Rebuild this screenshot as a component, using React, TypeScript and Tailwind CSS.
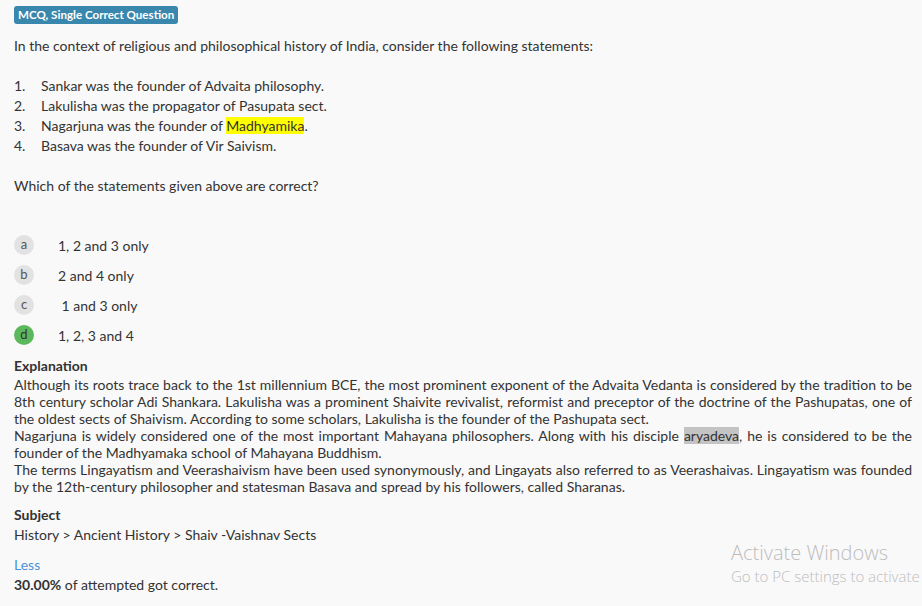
import React from "react";

const options = [
  { k: "a", t: "1, 2 and 3 only", correct: false },
  { k: "b", t: "2 and 4 only", correct: false },
  { k: "c", t: " 1 and 3 only", correct: false },
  { k: "d", t: "1, 2, 3 and 4", correct: true },
];

export default function App() {
  return (
    <div
      className="relative min-h-[606px] w-[922px] overflow-hidden bg-[#f9f9f9] pl-[14px] pr-[10px] pt-[6px] text-[14px] text-[#333333]"
      style={{ fontFamily: "Lato, 'Open Sans', sans-serif" }}
    >
      <div className="flex">
        <span className="rounded-[3px] bg-[#3a87ad] px-[4px] text-[11.6px] font-bold leading-[18px] text-white">
          MCQ, Single Correct Question
        </span>
      </div>

      <p className="mt-[12px] leading-[20px]">
        In the context of religious and philosophical history of India, consider the following statements:
      </p>

      <ol className="mt-[20px] leading-[20px]">
        <li className="flex">
          <span className="w-[27px]">1.</span>
          <span>Sankar was the founder of Advaita philosophy.</span>
        </li>
        <li className="flex">
          <span className="w-[27px]">2.</span>
          <span>Lakulisha was the propagator of Pasupata sect.</span>
        </li>
        <li className="flex">
          <span className="w-[27px]">3.</span>
          <span>
            Nagarjuna was the founder of <span className="bg-[#ffff00]">Madhyamika</span>.
          </span>
        </li>
        <li className="flex">
          <span className="w-[27px]">4.</span>
          <span>Basava was the founder of Vir Saivism.</span>
        </li>
      </ol>

      <p className="mt-[20px] leading-[20px]">Which of the statements given above are correct?</p>

      <div className="mt-[34px] flex flex-col">
        {options.map((o) => (
          <div key={o.k} className="flex h-[30px] items-center">
            <span
              className={
                o.correct
                  ? "flex h-[20px] w-[20px] items-center justify-center rounded-full bg-[#5cb85c] pb-[1px] text-[13px] leading-none text-[#333333]"
                  : "flex h-[20px] w-[20px] items-center justify-center rounded-full bg-[#e2e2e2] pb-[1px] text-[13px] leading-none text-[#555555]"
              }
            >
              {o.k}
            </span>
            <span className="ml-[24px] whitespace-pre">{o.t}</span>
          </div>
        ))}
      </div>

      <div className="mt-[7px] font-bold leading-[18px]">Explanation</div>
      <p className="mt-[1px] text-justify leading-[17px]">
        Although its roots trace back to the 1st millennium BCE, the most prominent exponent of the Advaita Vedanta is
        considered by the tradition to be 8th century scholar Adi Shankara. Lakulisha was a prominent Shaivite revivalist,
        reformist and preceptor of the doctrine of the Pashupatas, one of the oldest sects of Shaivism. According to some
        scholars, Lakulisha is the founder of the Pashupata sect.
        <br />
        Nagarjuna is widely considered one of the most important Mahayana philosophers. Along with his disciple{" "}
        <span className="bg-[#c4c4c4]">aryadeva</span>, he is considered to be the founder of the Madhyamaka school of
        Mahayana Buddhism.
        <br />
        The terms Lingayatism and Veerashaivism have been used synonymously, and Lingayats also referred to as
        Veerashaivas. Lingayatism was founded by the 12th-century philosopher and statesman Basava and spread by his
        followers, called Sharanas.
      </p>

      <div className="mt-[10px] font-bold leading-[20px]">Subject</div>
      <div className="leading-[20px]">History &gt; Ancient History &gt; Shaiv -Vaishnav Sects</div>

      <div className="mt-[10px] leading-[20px] text-[#4a94d8]">Less</div>
      <div className="leading-[20px]">
        <span className="font-bold">30.00%</span> of attempted got correct.
      </div>

      <div
        className="pointer-events-none absolute left-[731px] top-[540px] text-[#bdbdbd]"
        style={{ fontFamily: "'Open Sans', 'Noto Sans', sans-serif" }}
      >
        <div className="text-[20px] font-light leading-[26px]">Activate Windows</div>
        <div className="text-[15px] font-light leading-[21px]">Go to PC settings to activate</div>
      </div>
    </div>
  );
}
